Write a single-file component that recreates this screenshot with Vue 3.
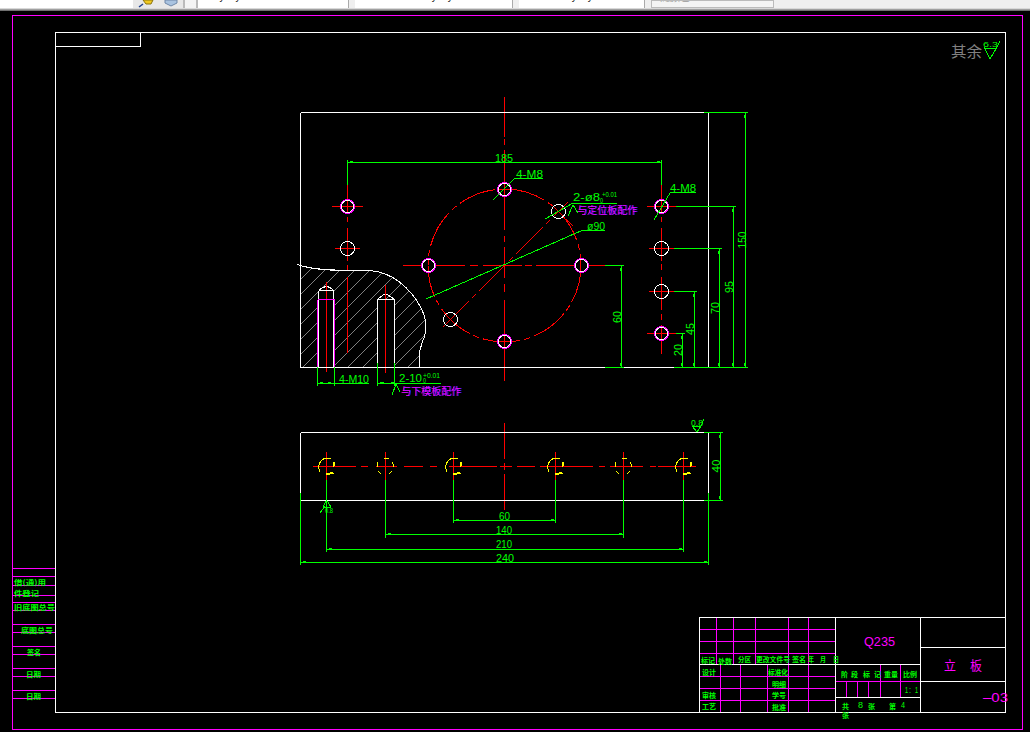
<script setup>
const segs = (x, list) => list.map(([a, b]) => ({ x1: x, y1: a, x2: x, y2: b }))
const hsegs = (y, list) => list.map(([a, b]) => ({ x1: a, y1: y, x2: b, y2: y }))

const white = [
  { x1: 300.5, y1: 112.5, x2: 708.5, y2: 112.5 },
  { x1: 300.5, y1: 112.5, x2: 300.5, y2: 367.5 },
  { x1: 708.5, y1: 112.5, x2: 708.5, y2: 367.5 },
  ...hsegs(367.5, [[300, 605], [624, 674]]),
  { x1: 300.5, y1: 432.5, x2: 708.5, y2: 432.5 },
  { x1: 300.5, y1: 500.5, x2: 708.5, y2: 500.5 },
  { x1: 300.5, y1: 432.5, x2: 300.5, y2: 500.5 },
  { x1: 708.5, y1: 432.5, x2: 708.5, y2: 500.5 },
  // blind holes
  { x1: 318.5, y1: 291, x2: 318.5, y2: 367 },
  { x1: 333.5, y1: 291, x2: 333.5, y2: 367 },
  { x1: 318.5, y1: 290.5, x2: 333.5, y2: 290.5 },
  { x1: 377.5, y1: 299, x2: 377.5, y2: 367 },
  { x1: 394.5, y1: 299, x2: 394.5, y2: 367 },
  { x1: 377.5, y1: 299.5, x2: 394.5, y2: 299.5 },
  // title block
  { x1: 835.5, y1: 617, x2: 835.5, y2: 712 },
  { x1: 920.5, y1: 617, x2: 920.5, y2: 712 },
  { x1: 699.5, y1: 664.5, x2: 920.5, y2: 664.5 },
  { x1: 920.5, y1: 647.5, x2: 1005.5, y2: 647.5 },
  { x1: 920.5, y1: 681.5, x2: 1005.5, y2: 681.5 },
  { x1: 835.5, y1: 697.5, x2: 920.5, y2: 697.5 },
]

const magenta = [
  ...[568.5, 576.5, 585.5, 595.5, 602.5, 610.5, 624.5, 632.5, 646.5, 654.5, 668.5, 676.5, 690.5, 698.5].map((y) => ({ x1: 13, y1: y, x2: 55, y2: y })),
  ...[629.5, 641.5, 653.5, 676.5, 688.5, 700.5].map((y) => ({ x1: 700, y1: y, x2: 835, y2: y })),
  ...[716.5, 733.5, 755.5, 788.5, 808.5].map((x) => ({ x1: x, y1: 618, x2: x, y2: 664 })),
  ...[720.5, 740.5, 767.5, 788.5, 808.5].map((x) => ({ x1: x, y1: 665, x2: x, y2: 712 })),
  { x1: 836, y1: 681.5, x2: 920, y2: 681.5 },
  ...[846.5, 857.5, 868.5].map((x) => ({ x1: x, y1: 682, x2: x, y2: 697 })),
  ...[880.5, 900.5].map((x) => ({ x1: x, y1: 665, x2: x, y2: 697 })),
  { x1: 317.5, y1: 299.5, x2: 334.5, y2: 299.5 },
  { x1: 317.5, y1: 299.5, x2: 317.5, y2: 367 },
  { x1: 334.5, y1: 299.5, x2: 334.5, y2: 367 },
]

const sideStops = [[326.5, 282, 372], [385.5, 285, 373]]
const red = [
  ...segs(504.5, [[97, 137], [139, 145], [150, 230], [236, 242], [247, 278], [284, 292], [300, 381]]),
  ...hsegs(265.5, [[403, 421], [436, 465], [470, 478], [483, 522], [525, 532], [536, 574], [588, 605]]),
  ...segs(347.5, [[184, 213], [217, 222], [228, 261], [265, 270], [277, 353]]),
  ...segs(661.5, [[184, 213], [217, 222], [228, 261], [264, 270], [277, 310], [314, 320], [325, 354]]),
  { x1: 332, y1: 206.5, x2: 363, y2: 206.5 },
  { x1: 335, y1: 248.5, x2: 360, y2: 248.5 },
  { x1: 647, y1: 206.5, x2: 676, y2: 206.5 },
  { x1: 649, y1: 248.5, x2: 674, y2: 248.5 },
  { x1: 649, y1: 291.5, x2: 674, y2: 291.5 },
  { x1: 647, y1: 333.5, x2: 676, y2: 333.5 },
  { x1: 498, y1: 189.5, x2: 511, y2: 189.5 },
  { x1: 498, y1: 341.5, x2: 511, y2: 341.5 },
  { x1: 551, y1: 204, x2: 564, y2: 217 },
  { x1: 566, y1: 219, x2: 573, y2: 226 },
  { x1: 444, y1: 313, x2: 457, y2: 326 },
  ...sideStops.map(([x, a, b]) => ({ x1: x, y1: a, x2: x, y2: b })),
  // lower view
  ...hsegs(466.5, [[313, 356], [361, 368], [376, 397], [404, 423], [430, 437], [449, 497], [500, 512], [517, 535], [540, 593], [599, 605], [610, 643], [650, 656], [658, 696]]),
  ...[326.5, 385.5, 453.5, 555.5, 623.5, 683.5].map((x) => ({ x1: x, y1: 452, x2: x, y2: 480 })),
  ...segs(504.5, [[423, 459], [463, 470], [474, 510]]),
]

const green = [
  // upper view dims
  { x1: 704, y1: 112.5, x2: 748, y2: 112.5 },
  { x1: 674, y1: 367.5, x2: 748, y2: 367.5 },
  { x1: 605, y1: 367.5, x2: 624, y2: 367.5 },
  { x1: 347.5, y1: 160, x2: 347.5, y2: 185 },
  { x1: 661.5, y1: 160, x2: 661.5, y2: 185 },
  { x1: 676, y1: 206.5, x2: 736, y2: 206.5 },
  { x1: 674, y1: 248.5, x2: 722, y2: 248.5 },
  { x1: 605, y1: 265.5, x2: 624, y2: 265.5 },
  { x1: 674, y1: 291.5, x2: 697, y2: 291.5 },
  { x1: 676, y1: 333.5, x2: 685, y2: 333.5 },
  // leaders
  { x1: 493, y1: 200, x2: 515, y2: 178 },
  { x1: 515, y1: 178.5, x2: 543, y2: 178.5 },
  { x1: 654, y1: 220, x2: 670, y2: 193 },
  { x1: 670, y1: 192.5, x2: 696, y2: 192.5 },
  { x1: 545, y1: 219, x2: 573, y2: 203 },
  { x1: 573, y1: 203.5, x2: 617, y2: 203.5 },
  { x1: 426, y1: 299, x2: 583, y2: 230 },
  { x1: 583, y1: 230.5, x2: 605, y2: 230.5 },
  // blind holes
  { x1: 317.5, y1: 367, x2: 317.5, y2: 386 },
  { x1: 334.5, y1: 367, x2: 334.5, y2: 386 },
  { x1: 377.5, y1: 363, x2: 377.5, y2: 386 },
  { x1: 394.5, y1: 363, x2: 394.5, y2: 386 },
  // lower view
  { x1: 300.5, y1: 493, x2: 300.5, y2: 565 },
  { x1: 708.5, y1: 493, x2: 708.5, y2: 565 },
  { x1: 326.5, y1: 480, x2: 326.5, y2: 552 },
  { x1: 683.5, y1: 480, x2: 683.5, y2: 552 },
  { x1: 385.5, y1: 480, x2: 385.5, y2: 538 },
  { x1: 623.5, y1: 480, x2: 623.5, y2: 538 },
  { x1: 453.5, y1: 480, x2: 453.5, y2: 523 },
  { x1: 555.5, y1: 480, x2: 555.5, y2: 523 },
  { x1: 704, y1: 432.5, x2: 723, y2: 432.5 },
  { x1: 704, y1: 500.5, x2: 723, y2: 500.5 },
  // surface marks
  { x1: 323, y1: 507, x2: 326.5, y2: 500 },
  { x1: 326.5, y1: 500, x2: 331, y2: 507 },
  { x1: 323, y1: 507, x2: 331, y2: 507 },
  { x1: 320, y1: 513, x2: 325, y2: 506 },
  { x1: 692, y1: 426, x2: 697, y2: 432 },
  { x1: 697, y1: 432, x2: 701, y2: 426 },
  { x1: 692, y1: 426, x2: 701, y2: 426 },
  { x1: 701, y1: 426, x2: 704, y2: 419 },
  { x1: 984, y1: 47, x2: 990, y2: 59 },
  { x1: 990, y1: 59, x2: 997, y2: 47 },
  { x1: 984, y1: 48, x2: 997, y2: 48 },
  { x1: 997, y1: 47, x2: 1000, y2: 41 },
  { x1: 573, y1: 205, x2: 568, y2: 216 },
  { x1: 573, y1: 205, x2: 578, y2: 213 },
  { x1: 396, y1: 384, x2: 392, y2: 395 },
  { x1: 396, y1: 384, x2: 400, y2: 392 },
]

// dimension lines with arrowhead blobs at both ends
const dims = [
  { x1: 347.5, y1: 162.5, x2: 661.5, y2: 162.5 },
  { x1: 745.5, y1: 112.5, x2: 745.5, y2: 367.5 },
  { x1: 733.5, y1: 206.5, x2: 733.5, y2: 367.5 },
  { x1: 719.5, y1: 248.5, x2: 719.5, y2: 367.5 },
  { x1: 621.5, y1: 265.5, x2: 621.5, y2: 367.5 },
  { x1: 694.5, y1: 291.5, x2: 694.5, y2: 367.5 },
  { x1: 682.5, y1: 333.5, x2: 682.5, y2: 367.5 },
  { x1: 317.5, y1: 383.5, x2: 369, y2: 383.5, one: true },
  { x1: 377.5, y1: 383.5, x2: 441, y2: 383.5, one: true },
  { x1: 720.5, y1: 432.5, x2: 720.5, y2: 500.5 },
  { x1: 300.5, y1: 562.5, x2: 708.5, y2: 562.5 },
  { x1: 326.5, y1: 549.5, x2: 683.5, y2: 549.5 },
  { x1: 385.5, y1: 534.5, x2: 623.5, y2: 534.5 },
  { x1: 453.5, y1: 520.5, x2: 555.5, y2: 520.5 },
]
const blobs = dims.flatMap((d) => {
  const h = d.y1 === d.y2
  const list = []
  if (h) {
    list.push({ x: d.x1 + 2, y: d.y1 - 1.5, w: 3, h: 2 })
    if (!d.one) list.push({ x: d.x2 - 5, y: d.y1 - 1.5, w: 3, h: 2 })
  } else {
    list.push({ x: d.x1 - 1.5, y: d.y1 + 2, w: 2, h: 3 })
    list.push({ x: d.x1 - 1.5, y: d.y2 - 5, w: 2, h: 3 })
  }
  return list
})
blobs.push({ x: 328, y: 382, w: 3, h: 2 }, { x: 320, y: 382, w: 3, h: 2 }, { x: 381, y: 382, w: 3, h: 2 }, { x: 391, y: 382, w: 3, h: 2 })

const whiteHoles = [[347.5, 248.5], [558.5, 211.5], [450.5, 319.5], [661.5, 248.5], [661.5, 291.5]]
const mixHoles = [[347.5, 206.5], [504.5, 189.5], [428.5, 265.5], [581.5, 265.5], [504.5, 341.5], [661.5, 206.5], [661.5, 333.5]]

const hatch = []
for (let c = 290; c < 720; c += 15) hatch.push({ x1: c - 110, y1: 370, x2: c, y2: 260 })

const bigYellow = [326.5, 453.5, 555.5, 683.5]
const smallYellow = [385.5, 623.5]

const T = (t, x, y, w, cls = 'g', size = 11.5, rot = 0) => ({ t, x, y, w, cls, size, rot })
const labels = [
  T('185', 495, 162, 18),
  T('4-M8', 516, 178, 27),
  T('4-M8', 670, 192, 26),
  T('2-ø8', 573, 201, 27),
  T('+0.01', 602, 197, 15, 'g', 8),
  T('0', 600, 203, 3, 'g', 7),
  T('ø90', 587, 230, 18),
  T('4-M10', 339, 383, 30),
  T('2-10', 399, 382, 23),
  T('+0.01', 423, 378, 17, 'g', 8),
  T('0', 423, 383, 3, 'g', 7),
  T('150', 746, 240, 17, 'g', 11.5, -90),
  T('95', 733, 287, 12, 'g', 11.5, -90),
  T('70', 719, 308, 12, 'g', 11.5, -90),
  T('60', 621, 317, 12, 'g', 11.5, -90),
  T('45', 694, 329, 12, 'g', 11.5, -90),
  T('20', 682, 350, 12, 'g', 11.5, -90),
  T('40', 720, 466, 13, 'g', 11.5, -90),
  T('60', 499, 520, 11),
  T('140', 496, 534, 16),
  T('210', 496, 548, 16),
  T('240', 496, 562, 18),
  T('0.8', 325, 513, 8, 'g', 8),
  T('0.8', 691, 426, 12, 'g', 9),
  T('6.3', 983, 47, 15, 'g', 8),
  T('其余', 951, 57, 31, 'cjk gray', 15),
  T('与定位板配作', 577, 214, 60, 'cjk m shadow', 10),
  T('与下模板配作', 401, 395, 60, 'cjk m shadow', 10),
  T('Q235', 864, 646, 31, 'm', 13),
  T('立', 944, 670, 12, 'cjk m', 13),
  T('板', 970, 670, 12, 'cjk m', 13),
  T('–03', 983, 702, 25, 'm', 13),
  T('1', 905, 693, 3, 'g', 9),
  T(':', 909, 693, 2, 'g', 9),
  T('1', 915, 693, 3, 'g', 9),
  T('8', 858, 708, 5, 'g', 9),
  T('4', 901, 708, 4, 'g', 9),
  // title block
  T('标记', 701, 663, 14, 'cjk g', 7),
  T('处数', 718, 664, 14, 'cjk g', 7),
  T('分区', 738, 662, 13, 'cjk g', 7),
  T('更改文件号', 756, 662, 34, 'cjk g', 7),
  T('签名', 792, 662, 14, 'cjk g', 7),
  T('年', 808, 662, 6, 'cjk g', 7),
  T('月', 820, 662, 6, 'cjk g', 7),
  T('日', 833, 662, 6, 'cjk g', 7),
  T('设计', 702, 675, 14, 'cjk g', 7),
  T('标准化', 768, 675, 20, 'cjk g', 7),
  T('明细', 772, 687, 14, 'cjk g', 7),
  T('审核', 702, 698, 14, 'cjk g', 7),
  T('学号', 772, 698, 14, 'cjk g', 7),
  T('工艺', 702, 709, 14, 'cjk g', 7),
  T('批准', 772, 710, 14, 'cjk g', 7),
  T('阶', 841, 677, 7, 'cjk g', 7),
  T('段', 851, 677, 7, 'cjk g', 7),
  T('标', 863, 677, 7, 'cjk g', 7),
  T('记', 874, 677, 7, 'cjk g', 7),
  T('重量', 884, 677, 14, 'cjk g', 7),
  T('比例', 903, 677, 14, 'cjk g', 7),
  T('共', 842, 709, 7, 'cjk g', 7),
  T('张', 868, 709, 7, 'cjk g', 7),
  T('第', 889, 709, 7, 'cjk g', 7),
  T('张', 842, 718, 7, 'cjk g', 7),
  // left strip
  T('借(通)用', 14, 585, 32, 'cjk g', 7),
  T('件登记', 14, 596, 25, 'cjk g', 7),
  T('旧底图总号', 14, 610, 41, 'cjk g', 7),
  T('底图总号', 21, 633, 32, 'cjk g', 7),
  T('签名', 27, 655, 14, 'cjk g', 7),
  T('日期', 26, 677, 15, 'cjk g', 7),
  T('日期', 26, 699, 15, 'cjk g', 7),
].map((l) => ({
  ...l,
  transform: l.rot ? `rotate(${l.rot} ${l.x} ${l.y})` : undefined,
  anchor: l.rot ? 'middle' : 'start',
}))

const boxes = [
  { w: 151, text: '□ ByLayer', pad: 6, gray: false },
  { w: 158, text: 'ByLayer', pad: 70, gray: false },
  { w: 126, text: 'ByLayer', pad: 46, gray: false },
  { w: 123, text: '随颜色', pad: 8, gray: true },
]
</script>

<template>
  <div class="page">
    <div class="toolbar">
      <div class="lead"></div>
      <div class="icons">
        <svg class="ico" width="20" height="8" viewBox="0 0 20 8">
          <path d="M4 7 L8 4" stroke="#1f3f8f" stroke-width="1.5" />
          <path d="M8 0 H18 L16 4 H11 Z" fill="#f0c820" stroke="#8a7410" />
        </svg>
        <svg class="ico" width="16" height="8" viewBox="0 0 16 8">
          <path d="M2 0 H14 V3 L8 6 L2 3 Z" fill="#a9c3e0" stroke="#7088a8" />
        </svg>
      </div>
      <div class="grip"></div>
      <div class="boxes">
        <div v-for="(b, i) in boxes" :key="i" class="box" :class="{ muted: b.gray }" :style="{ width: b.w + 'px', paddingLeft: b.pad + 'px' }">
          <span class="box-text">{{ b.text }}</span>
        </div>
      </div>
    </div>
    <svg class="drawing" width="1030" height="721" viewBox="0 11 1030 721">
      <defs>
        <clipPath id="section">
          <path d="M300 265 C312 270 335 271 370 270.5 C392 272 410 288 420 306 C428 320 427 332 422 343 L419.5 352 L419.5 367 L300.5 367 Z" />
        </clipPath>
      </defs>

      <rect class="frame-m" x="12.5" y="15.5" width="1010" height="714" />
      <rect class="frame-w" x="55.5" y="32.5" width="950" height="680" />
      <path class="frame-w" d="M55.5 46.5 H140.5 V32.5" />
      <rect class="frame-w" x="699.5" y="617.5" width="306" height="95" />

      <g clip-path="url(#section)">
        <line v-for="(l, i) in hatch" :key="i" class="hatch" v-bind="l" />
      </g>
      <rect class="void" x="319" y="291" width="14" height="76" />
      <rect class="void" x="378" y="300" width="16" height="67" />
      <path class="line-w" d="M297 264.5 C312 270 335 271 370 270.5 C392 272 410 288 420 306 C428 320 427 332 422 343 L419.5 352 L419.5 367" />
      <path class="line-w" d="M319 290 L323 287.5 Q326.5 286 330 287.5 L333 290" />
      <path class="line-w" d="M378 299 L383 295 Q385.5 293 388 295 L394 299" />

      <circle class="center-red" cx="504.5" cy="265.5" r="76.5" />
      <line class="center-red" x1="442.5" y1="327.5" x2="568" y2="202" />
      <line v-for="(l, i) in red" :key="'r' + i" class="line-r" v-bind="l" />
      <line v-for="(l, i) in white" :key="'w' + i" class="line-w" v-bind="l" />
      <line v-for="(l, i) in magenta" :key="'m' + i" class="line-m" v-bind="l" />

      <circle v-for="(h, i) in whiteHoles" :key="'wh' + i" class="hole-w" :cx="h[0]" :cy="h[1]" r="7" />
      <g v-for="(h, i) in mixHoles" :key="'mh' + i">
        <circle class="hole-m" :cx="h[0]" :cy="h[1]" r="7" />
        <circle class="hole-w" :cx="h[0]" :cy="h[1]" r="6" />
      </g>

      <g v-for="x in bigYellow" :key="'by' + x" :transform="`translate(${x} 466.5)`">
        <path class="yel" d="M-6.5 5 A9 9 0 0 1 -2 -8 H4" />
        <path class="yel thick" d="M7 -4 L8 0" />
        <path class="yel thick" d="M0 8 L7 6" />
      </g>
      <g v-for="x in smallYellow" :key="'sy' + x" :transform="`translate(${x} 466.5)`">
        <path class="yel" d="M-8 -4.5 V0.5 M-2 -8.5 H3 M7 -4.5 L8.5 0.5 M-7 5 L-4 8 M3 8 L6 5" />
      </g>

      <line v-for="(l, i) in green" :key="'g' + i" class="line-g" v-bind="l" />
      <line v-for="(l, i) in dims" :key="'d' + i" class="line-g" :x1="l.x1" :y1="l.y1" :x2="l.x2" :y2="l.y2" />
      <rect v-for="(b, i) in blobs" :key="'b' + i" class="blob" :x="b.x" :y="b.y" :width="b.w" :height="b.h" />

      <text
        v-for="(l, i) in labels"
        :key="'t' + i"
        :class="l.cls"
        :x="l.x"
        :y="l.y"
        :font-size="l.size"
        :text-anchor="l.anchor"
        :transform="l.transform"
        :textLength="l.w"
        lengthAdjust="spacingAndGlyphs"
      >{{ l.t }}</text>
    </svg>
  </div>
</template>

<style scoped>
.page {
  width: 1030px;
  height: 732px;
  background: #000;
  overflow: hidden;
}
.toolbar {
  display: flex;
  height: 8px;
  background: #efefef;
  border-bottom: 1px solid #d8d8d8;
  box-shadow: 0 1px 0 #a0a0a0, 0 2px 0 #707070;
  margin-bottom: 2px;
  overflow: hidden;
}
.lead {
  width: 133px;
  background: #fff;
}
.icons {
  display: flex;
  gap: 8px;
  width: 50px;
  padding-left: 2px;
  background: #e8e8e8;
  box-sizing: border-box;
}
.grip {
  width: 15px;
  border-left: 2px solid #bbb;
  border-right: 2px solid #bbb;
  box-sizing: border-box;
  background: #f4f4f4;
}
.boxes {
  display: flex;
  gap: 6px;
}
.box {
  height: 8px;
  background: #fff;
  border-right: 1px solid #aaa;
  box-sizing: border-box;
  overflow: hidden;
  font-family: "Liberation Sans", "Noto Sans CJK SC", sans-serif;
  font-size: 10px;
  line-height: 10px;
  color: #111;
}
.box.muted {
  color: #999;
  border: 1px solid #bbb;
  background: #f4f4f4;
}
.box-text {
  display: block;
  margin-top: -8px;
  white-space: nowrap;
}
.drawing {
  display: block;
  shape-rendering: crispEdges;
}
.frame-m, .frame-w {
  fill: none;
  stroke-width: 1;
}
.frame-m { stroke: #ff00ff; }
.frame-w { stroke: #fff; }
.line-w { stroke: #fff; stroke-width: 1; fill: none; }
.line-m { stroke: #ff00ff; stroke-width: 1; }
.line-r { stroke: #ff0000; stroke-width: 1; }
.line-g { stroke: #00ff00; stroke-width: 1; }
.hatch { stroke: #808080; stroke-width: 1; }
.void { fill: #000; }
.center-red {
  fill: none;
  stroke: #ff0000;
  stroke-width: 1;
  stroke-dasharray: 38 4 6 4;
}
.hole-w { fill: none; stroke: #fff; stroke-width: 1; }
.hole-m { fill: none; stroke: #ff00ff; stroke-width: 1; }
.yel { fill: none; stroke: #ffff00; stroke-width: 1; }
.yel.thick { stroke-width: 2; }
.blob { fill: #00ff00; }
text {
  font-family: "Liberation Sans", sans-serif;
}
.g { fill: #00ff00; }
.m { fill: #ff00ff; }
.gray { fill: #808080; }
.cjk { font-family: "Noto Sans CJK SC", sans-serif; }
.cjk.g { font-weight: 700; }
.shadow { filter: drop-shadow(1px 0 0 #2222ff); }
</style>
